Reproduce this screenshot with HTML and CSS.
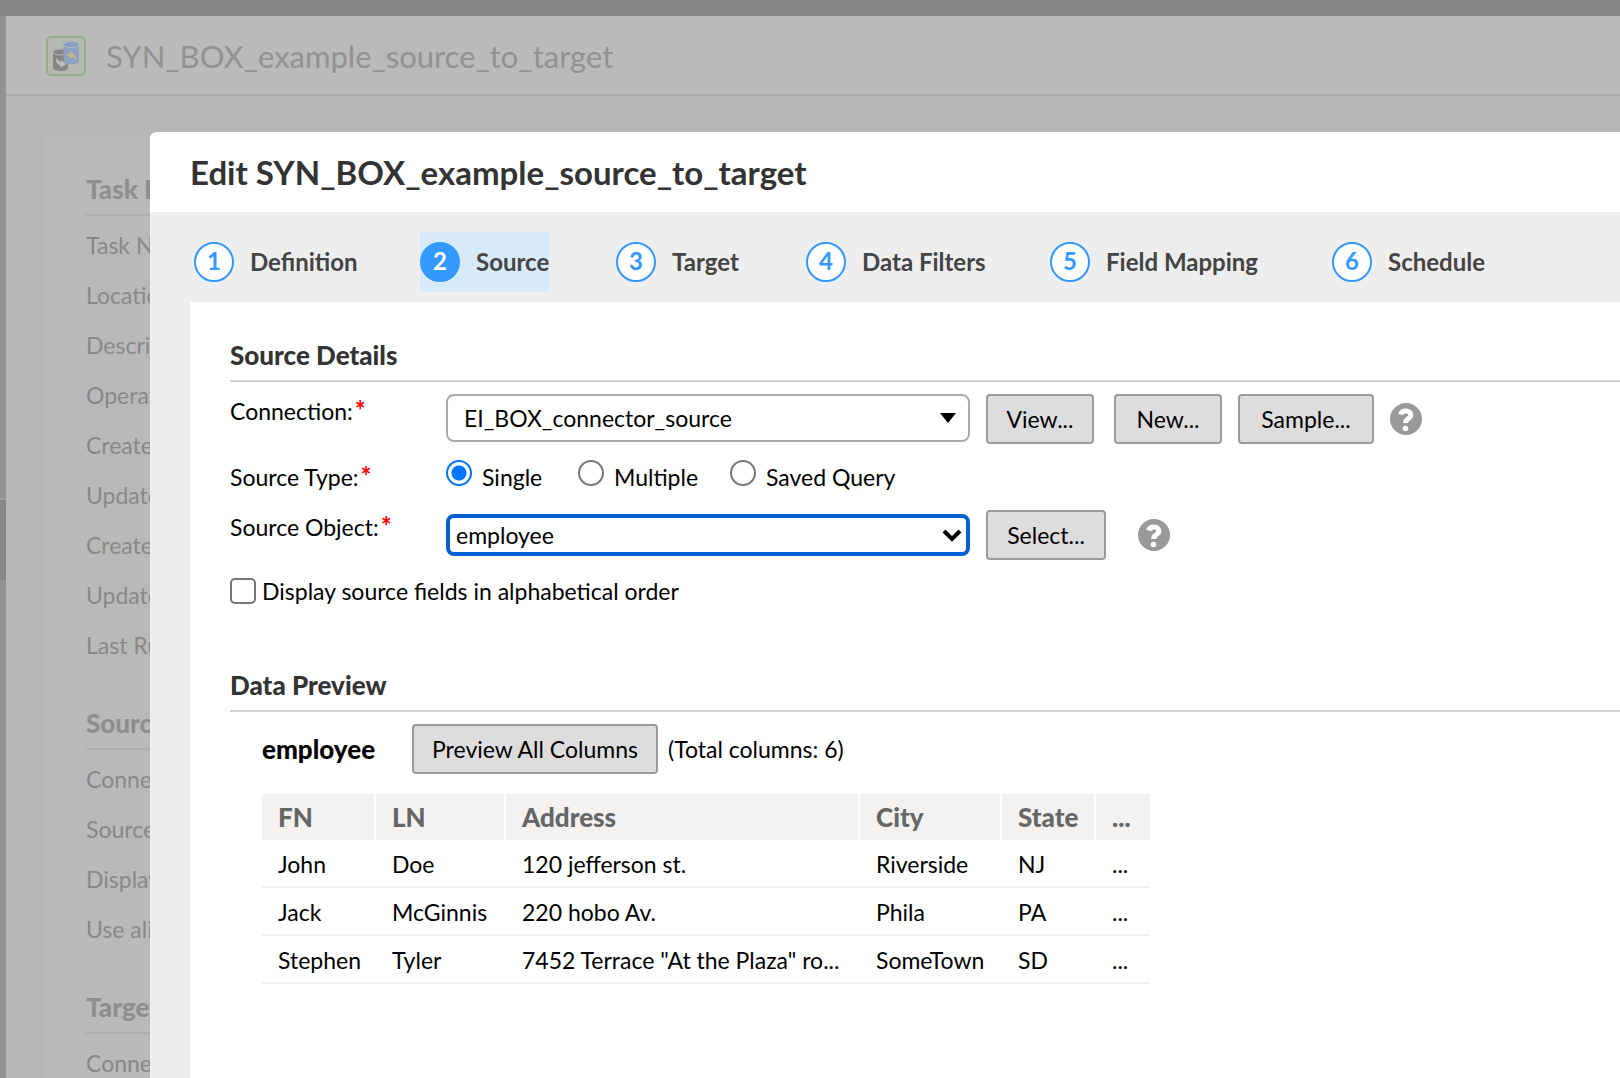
FILE: index.html
```html
<!DOCTYPE html>
<html lang="en">
<head>
<meta charset="utf-8">
<title>Edit SYN_BOX_example_source_to_target</title>
<link rel="stylesheet" href="styles.css">
</head>
<body>
<div class="app">
  <div class="topbar"></div>
  <div class="workspace">
    <div class="rail"><div class="rail-handle"></div></div>
    <main class="page">
      <header class="page-header">
        <svg class="task-icon" viewBox="0 0 40 40" aria-hidden="true">
          <rect x="1" y="1" width="38" height="38" rx="4" fill="#b5b9b2" stroke="#92ac88" stroke-width="2"/>
          <path d="M7 16v16c0 4 15 4 15 0V16z" fill="#868686"/>
          <ellipse cx="14.500" cy="16" rx="7.500" ry="3" fill="#868686" stroke="#b5b9b2"/>
          <path d="M10 22c0 5 2 7 5 8v2l5-4-5-4v2c-2-1-3-2-5-4z" fill="#bcbcbc"/>
          <path d="M17.500 8.500v17c0 3.500 15.500 3.500 15.500 0v-17z" fill="#8ea0bf"/>
          <ellipse cx="25.200" cy="8.500" rx="7.800" ry="3" fill="#869bbf" stroke="#b5bcc2"/>
          <path d="M20.500 19l5-4v2.500c3 0 5 3 4 7-1-2.500-2-3.500-4-3.500V23z" fill="#c3b983"/>
        </svg>
        <h1 class="page-title">SYN_BOX_example_source_to_target</h1>
      </header>
      <div class="summary">
        <section class="summary-group">
          <h2>Task Info</h2>
          <ul>
            <li>Task Name:</li>
            <li>Location:</li>
            <li>Description:</li>
            <li>Operation:</li>
            <li>Created On:</li>
            <li>Updated On:</li>
            <li>Created By:</li>
            <li>Updated By:</li>
            <li>Last Run:</li>
          </ul>
        </section>
        <section class="summary-group">
          <h2>Source</h2>
          <ul>
            <li>Connection:</li>
            <li>Source:</li>
            <li>Display:</li>
            <li>Use alias:</li>
          </ul>
        </section>
        <section class="summary-group">
          <h2>Target</h2>
          <ul>
            <li>Connection:</li>
          </ul>
        </section>
      </div>
    </main>
  </div>

  <div class="dialog" role="dialog" aria-labelledby="dialog-title">
    <h2 class="dialog-title" id="dialog-title">Edit SYN_BOX_example_source_to_target</h2>
    <div class="dialog-body">
      <nav class="steps">
        <a class="step" href="#definition"><span class="num">1</span><span>Definition</span></a>
        <a class="step current" href="#source"><span class="num">2</span><span>Source</span></a>
        <a class="step" href="#target"><span class="num">3</span><span>Target</span></a>
        <a class="step" href="#filters"><span class="num">4</span><span>Data Filters</span></a>
        <a class="step" href="#mapping"><span class="num">5</span><span>Field Mapping</span></a>
        <a class="step" href="#schedule"><span class="num">6</span><span>Schedule</span></a>
      </nav>
      <div class="panel">
        <h3 class="section-title">Source Details</h3>
        <form class="form">
          <div class="row">
            <label class="label" for="connection">Connection:<span class="req">*</span></label>
            <div class="select connection">
              <select id="connection"><option>EI_BOX_connector_source</option></select>
              <svg class="arrow" viewBox="0 0 20 14" aria-hidden="true"><path d="M2 2h16l-8 10z"/></svg>
            </div>
            <div class="actions">
              <button type="button" class="btn view">View...</button>
              <button type="button" class="btn new">New...</button>
              <button type="button" class="btn sample">Sample...</button>
              <svg class="help" viewBox="0 0 32 32" role="img" aria-label="Help"><circle cx="16" cy="16" r="16"/><path d="M10.500 11.500C12 6.500 21 7 21 12c0 3.500-5.500 3.500-5.500 8"/><circle class="dot" cx="15.500" cy="25.500" r="2.800"/></svg>
            </div>
          </div>
          <div class="row type" role="radiogroup" aria-label="Source Type">
            <span class="label">Source Type:<span class="req">*</span></span>
            <div class="radios">
              <label class="choice"><input type="radio" name="type" checked><span>Single</span></label>
              <label class="choice"><input type="radio" name="type"><span>Multiple</span></label>
              <label class="choice"><input type="radio" name="type"><span>Saved Query</span></label>
            </div>
          </div>
          <div class="row">
            <label class="label" for="object">Source Object:<span class="req">*</span></label>
            <div class="select object">
              <select id="object"><option>employee</option></select>
              <svg class="arrow" viewBox="0 0 20 14" aria-hidden="true"><path class="chevron" d="M2 3l8 8 8-8"/></svg>
            </div>
            <div class="actions wide">
              <button type="button" class="btn pick">Select...</button>
              <svg class="help" viewBox="0 0 32 32" role="img" aria-label="Help"><circle cx="16" cy="16" r="16"/><path d="M10.500 11.500C12 6.500 21 7 21 12c0 3.500-5.500 3.500-5.500 8"/><circle class="dot" cx="15.500" cy="25.500" r="2.800"/></svg>
            </div>
          </div>
          <label class="check"><input type="checkbox"><span>Display source fields in alphabetical order</span></label>
        </form>

        <h3 class="section-title">Data Preview</h3>
        <div class="preview">
          <div class="preview-bar">
            <strong class="preview-name">employee</strong>
            <button type="button" class="btn all">Preview All Columns</button>
            <span>(Total columns: 6)</span>
          </div>
          <table class="data">
            <colgroup><col class="c-fn"><col class="c-ln"><col class="c-address"><col class="c-city"><col class="c-state"><col class="c-more"></colgroup>
            <thead><tr><th>FN</th><th>LN</th><th>Address</th><th>City</th><th>State</th><th>...</th></tr></thead>
            <tbody>
              <tr><td>John</td><td>Doe</td><td>120 jefferson st.</td><td>Riverside</td><td>NJ</td><td>...</td></tr>
              <tr><td>Jack</td><td>McGinnis</td><td>220 hobo Av.</td><td>Phila</td><td>PA</td><td>...</td></tr>
              <tr><td>Stephen</td><td>Tyler</td><td>7452 Terrace "At the Plaza" ro...</td><td>SomeTown</td><td>SD</td><td>...</td></tr>
            </tbody>
          </table>
        </div>
      </div>
    </div>
  </div>
</div>
</body>
</html>
```
FILE: styles.css
```css
* { box-sizing: border-box; }
body {
  margin: 0;
  font: 23px/32px Lato, "Liberation Sans", sans-serif;
  color: #000;
}
h1, h2, h3, ul { margin: 0; padding: 0; }
ul { list-style: none; }
button, select { font: inherit; color: inherit; }

.app {
  position: relative;
  display: flex;
  flex-direction: column;
  height: 100vh;
  overflow: hidden;
}
.topbar { flex: none; height: 16px; background: #878787; }
.workspace { flex: 1; display: flex; min-height: 0; }
.rail { width: 6px; background: #939393; padding-top: 482px; }
.rail-handle { height: 82px; background: #878787; border-top: 2px solid #a0a0a0; }
.page { flex: 1; background: #b6b6b6; }
.page-header {
  display: flex;
  align-items: center;
  gap: 20px;
  height: 80px;
  padding: 2px 0 0 40px;
  background: #bababa;
  border-bottom: 2px solid #acacac;
}
.task-icon { width: 40px; height: 40px; }
.page-title { font-size: 31px; font-weight: 400; color: #929292; }
.summary {
  margin: 39px 0 0 40px;
  padding: 37px 40px;
  background: #b9b9b9;
  color: #888;
}
.summary-group { width: 100px; margin-bottom: 36px; white-space: nowrap; }
.summary-group h2 {
  height: 44px;
  border-bottom: 2px solid #adadad;
  font-size: 26px;
  font-weight: 900;
  line-height: 34px;
  color: #8e8e8e;
  overflow: hidden;
}
.summary-group ul { padding-top: 4px; }
.summary-group li { line-height: 50px; }

.dialog {
  position: absolute;
  top: 132px;
  right: 0;
  bottom: 0;
  left: 150px;
  display: flex;
  flex-direction: column;
  border-radius: 6px 0 0 0;
  background: #fff;
  overflow: hidden;
}
.dialog-title {
  padding: 0 40px;
  font-size: 33px;
  font-weight: 700;
  line-height: 80px;
  color: #333;
}
.dialog-body {
  flex: 1;
  display: flex;
  flex-direction: column;
  padding-left: 40px;
  background: #eee;
}
.steps {
  display: grid;
  grid-template-columns: 226px 196px 190px 244px 282px auto;
  justify-content: start;
  padding: 20px 4px 10px;
}
.step {
  display: flex;
  align-items: center;
  justify-self: start;
  gap: 16px;
  height: 60px;
  font-size: 24px;
  font-weight: 700;
  color: #444;
  text-decoration: none;
}
.current { background: #d6eafa; }
.num {
  width: 40px;
  height: 40px;
  border: 2px solid #39f;
  border-radius: 50%;
  background: #fff;
  color: #39f;
  line-height: 34px;
  text-align: center;
}
.current .num { background: #39f; color: #fff; }

.panel { flex: 1; padding: 36px 0 0 40px; background: #fff; }
.section-title {
  height: 44px;
  border-bottom: 2px solid #d6d2ce;
  font-size: 26px;
  font-weight: 900;
  line-height: 34px;
  color: #333;
}
.form { padding: 12px 0 62px; }
.row { display: flex; align-items: flex-start; height: 66px; }
.row.type { height: 50px; }
.label { width: 216px; padding-top: 1px; }
.req { margin-left: 2px; color: #f00; font-size: 26px; font-weight: 700; line-height: 24px; }
.select { position: relative; width: 524px; }
.select select {
  appearance: none;
  display: block;
  width: 100%;
  background: #fff;
  border: 2px solid #aaa;
  border-radius: 8px;
  outline: 0;
}
.connection select { height: 48px; padding: 0 16px; }
.object { margin-top: 4px; }
.object select { height: 42px; padding: 0 6px; border: 4px solid #0060d0; }
.arrow { position: absolute; right: 12px; top: 50%; width: 20px; height: 14px; margin-top: -7px; pointer-events: none; }
.object .arrow { right: 8px; }
.chevron { fill: none; stroke: #000; stroke-width: 4; }
.actions { display: flex; align-items: center; gap: 16px; margin-left: 16px; }
.actions.wide { gap: 32px; }
.btn {
  height: 50px;
  padding: 0;
  border: 2px solid #9b9b9b;
  border-radius: 4px;
  background: #ddd;
}
.view, .new { width: 108px; }
.view { margin-right: 4px; }
.sample { width: 136px; }
.pick { width: 120px; }
.all { width: 246px; }
.help { width: 32px; height: 32px; fill: #999; }
.help path { fill: none; stroke: #fff; stroke-width: 5; }
.help .dot { fill: #fff; }
.radios { display: grid; grid-template-columns: 132px 152px auto; }
.choice, .check { display: flex; }
.choice { gap: 10px; }
.choice span { padding-top: 1px; }
.check { gap: 6px; padding-top: 2px; }
.check span { line-height: 27px; height: 28px; }
input { width: 26px; height: 26px; margin: 0; }
input[type="radio"] {
  appearance: none;
  border: 2px solid #777;
  border-radius: 50%;
  background: #fff;
}
input[type="radio"]:checked {
  border-color: #0075ff;
  background: radial-gradient(circle, #0075ff 7px, #fff 8px);
}
input[type="checkbox"] {
  appearance: none;
  border: 2px solid #777;
  border-radius: 5px;
  background: #fff;
}

.preview { padding: 12px 0 0 32px; }
.preview-bar { display: flex; align-items: center; gap: 10px; margin-bottom: 20px; }
.preview-name { width: 140px; font-size: 26px; font-weight: 900; }
.data { width: 888px; table-layout: fixed; border-collapse: collapse; line-height: 46px; }
.c-fn { width: 114px; }
.c-ln { width: 130px; }
.c-address { width: 354px; }
.c-city { width: 142px; }
.c-state { width: 94px; }
.c-more { width: 54px; }
.data th, .data td { padding: 0 0 0 16px; text-align: left; white-space: nowrap; }
.data th {
  height: 46px;
  background: linear-gradient(#fff, #fff) right / 2px 100% no-repeat #f3f2f1;
  color: #666;
  font-size: 26px;
  font-weight: 900;
  line-height: 44px;
}
.data th:last-child { background: #f3f2f1; }
.data tbody tr { box-shadow: inset 0 -2px #f1f1f1; }
.data td { height: 48px; }
```
